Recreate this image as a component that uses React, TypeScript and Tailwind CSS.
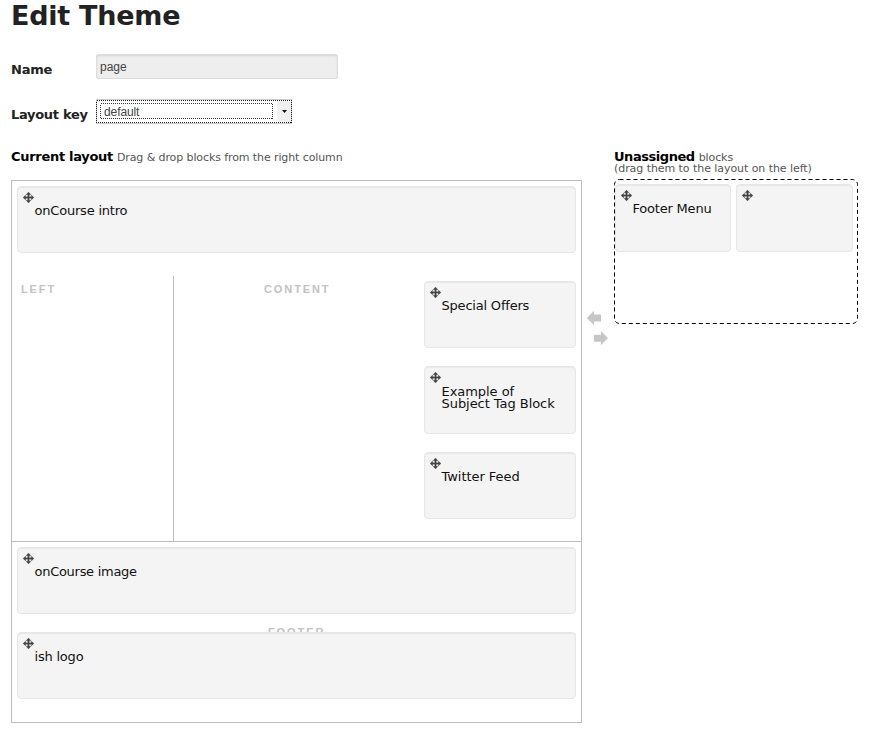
import React from "react";

const verdana = "font-['DejaVu_Sans',sans-serif]";

function MoveIcon() {
  return (
    <svg className="block h-[11px] w-[11px]" viewBox="0 0 11 11" fill="#444" stroke="#444" strokeWidth="0.2">
      <path d="M5.5 0 8 2.7H6.3V4.7H8.3V3L11 5.5 8.3 8V6.3H6.3V8.3H8L5.5 11 3 8.3H4.7V6.3H2.7V8L0 5.5 2.7 3V4.7H4.7V2.7H3Z" />
    </svg>
  );
}

type BlockProps = { children?: React.ReactNode; size?: string; text?: string };

function Block({ children, size = "h-[67px]", text = "pt-[2px] tracking-[-0.2px]" }: BlockProps) {
  return (
    <div
      className={`relative shrink-0 rounded-[4px] border border-[#e6e6e6] bg-[#f4f4f4] pt-[5px] pl-[5px] shadow-[inset_0_1px_1px_rgba(0,0,0,0.05)] ${size}`}
    >
      <MoveIcon />
      <div className={`pl-[11.5px] text-[13px] leading-[12px] whitespace-pre-line text-[#111] ${text}`}>
        {children}
      </div>
    </div>
  );
}

function RegionLabel({ children, className = "" }: { children: React.ReactNode; className?: string }) {
  return (
    <span
      className={`block font-['Liberation_Sans',sans-serif] text-[11px] leading-[12px] font-bold tracking-[1.9px] text-[#c2c2c2] ${className}`}
    >
      {children}
    </span>
  );
}

export default function App() {
  return (
    <div className={`h-[732px] w-[869px] overflow-hidden bg-white pl-[11px] text-[#222] ${verdana}`}>
      <h1 className="h-[54px] text-[27px] leading-[31px] font-bold tracking-[-0.25px]">Edit Theme</h1>

      <div className="flex h-[45px]">
        <label className="w-[85px] pt-[8px] text-[13px] leading-[15px] font-bold tracking-[-0.2px]">Name</label>
        <div className="h-[25px] w-[242px] rounded-[2px] border border-[#ddd] bg-[#eee] pl-[3px] font-['Liberation_Sans',sans-serif] text-[12px] leading-[24px] text-[#444] shadow-[inset_0_1px_2px_rgba(0,0,0,0.1)]">
          page
        </div>
      </div>

      <div className="flex h-[50px]">
        <label className="w-[85px] pt-[8px] text-[13px] leading-[15px] font-bold tracking-[-0.3px] whitespace-nowrap">
          Layout key
        </label>
        <div className="relative flex h-[25px] w-[197px] bg-white p-[4px]">
          <svg className="absolute inset-0" width="197" height="25" fill="none" shapeRendering="crispEdges">
            <path d="M181 2H195V23H181Z" fill="#f0f0f0" />
            <rect x="0.5" y="0.5" width="195" height="24" stroke="#ccc" />
            <rect x="0.5" y="1.5" width="195" height="22" stroke="#222" strokeDasharray="1 1" />
            <rect x="4.5" y="4.5" width="172" height="15" stroke="#333" strokeDasharray="1 1" />
            <path d="M186 11H191L188.5 14Z" fill="#111" shapeRendering="auto" />
          </svg>
          <span className="relative pt-px pl-[4px] font-['Liberation_Sans',sans-serif] text-[12px] leading-[17px] tracking-[-0.1px] text-[#444]">
            default
          </span>
        </div>
      </div>

      <div className="flex">
        <div className="w-[571px]">
          <div className="flex h-[31px] items-baseline gap-[4px] pt-px leading-[13px] whitespace-nowrap">
            <span className="text-[13px] font-bold tracking-[-0.3px] text-black">Current layout</span>
            <span className="text-[11px] tracking-[-0.1px] text-[#555]">
              Drag &amp; drop blocks from the right column
            </span>
          </div>
          <div className="h-[543px] border border-[#bbb]">
            <div className="h-[95px] px-[5px] pt-[5px]">
              <Block>onCourse intro</Block>
            </div>
            <div className="flex h-[266px] border-b border-[#bbb]">
              <div className="w-[162px] border-r border-[#bbb] pl-[9px]">
                <RegionLabel className="pt-[7px]">LEFT</RegionLabel>
              </div>
              <div className="w-[250px] pl-[90px]">
                <RegionLabel className="pt-[7px]">CONTENT</RegionLabel>
              </div>
              <div className="flex w-[152px] flex-col gap-[18px] pt-[5px]">
                <Block text="pt-[2px] tracking-[-0.2px]">Special Offers</Block>
                <Block size="h-[68px]" text="pt-[3px] tracking-[-0.05px]">
                  {"Example of\nSubject Tag Block"}
                </Block>
                <Block text="pt-[2px] tracking-[-0.05px]">Twitter Feed</Block>
              </div>
            </div>
            <div className="flex flex-col px-[5px] pt-[5px]">
              <Block text="pt-[2px] tracking-[-0.28px]">onCourse image</Block>
              <div className="mt-[14px] h-[4px] overflow-hidden pl-[251px]">
                <RegionLabel className="-mt-[2px]">FOOTER</RegionLabel>
              </div>
              <Block>ish logo</Block>
            </div>
          </div>
        </div>

        <div className="flex w-[32px] flex-col pt-[162px] pl-[5px]">
          <svg width="22" height="34" viewBox="0 0 22 34" fill="#c6c6c6">
            <path d="M-0.3 7 7 0V3.5H14V10.5H7V14Z" />
            <path d="M21 27.2 14 20V23.7H7V30.7H14V34Z" />
          </svg>
        </div>

        <div className="w-[244px]">
          <div className="h-[30px] pt-px whitespace-nowrap">
            <div className="flex h-[13px] items-baseline gap-[4px] leading-[13px]">
              <span className="text-[13px] font-bold tracking-[-0.45px] text-black">Unassigned</span>
              <span className="text-[11px] tracking-[-0.1px] text-[#555]">blocks</span>
            </div>
            <div className="text-[11px] leading-[11px] tracking-[-0.06px] text-[#555]">
              (drag them to the layout on the left)
            </div>
          </div>
          <div className="relative flex h-[145px] gap-[5px] pt-[5px] pl-px">
            <svg className="absolute inset-0" width="244" height="145" fill="none">
              <rect x="0.5" y="0.5" width="243" height="144" rx="5" stroke="#000" strokeDasharray="4 3" />
            </svg>
            <Block size="h-[68px] w-[116px]">Footer Menu</Block>
            <Block size="h-[68px] w-[117px]" />
          </div>
        </div>
      </div>
    </div>
  );
}
